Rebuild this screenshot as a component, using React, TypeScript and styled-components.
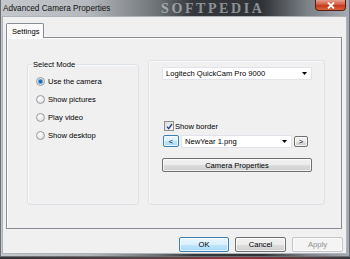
import React from "react";
import styled, { createGlobalStyle } from "styled-components";

const Global = createGlobalStyle`
  html, body { margin: 0; padding: 0; }
  body { background: #2b2b2b; font-family: "Liberation Sans", Arial, sans-serif; }
`;

const Screen = styled.div`
  width: 350px;
  height: 259px;
  overflow: hidden;
  background: linear-gradient(90deg, #3a3434 0%, #5a4444 40%, #8a3838 70%, #3a3a3a 100%);
`;

const Frame = styled.div`
  height: 257px;
  display: flex;
  flex-direction: column;
  background: linear-gradient(90deg, #c4c7cb 0%, #b5b9be 25%, #6d7277 45%, #34383c 55%, #2f3337 75%, #7d8288 88%, #a6abb1 100%);
  box-sizing: border-box;
  border-left: 1px solid #6b7076;
  border-right: 1px solid #6b7076;
  border-bottom: 1px solid #6b7076;
`;

const TitleBar = styled.div`
  height: 16px;
  display: flex;
  align-items: flex-start;
  overflow: hidden;
`;

const Title = styled.div`
  font-size: 8.2px;
  color: #111;
  padding: 4px 0 0 2px;
  white-space: nowrap;
  width: 158px;
`;

const Watermark = styled.div`
  font-family: "Liberation Serif", "Times New Roman", serif;
  font-weight: bold;
  font-size: 14px;
  line-height: 15px;
  letter-spacing: 2.6px;
  color: rgba(235, 238, 242, 0.5);
  margin-top: 1px;
  white-space: nowrap;
`;

const CloseButton = styled.div`
  margin-left: auto;
  margin-right: 3px;
  width: 31px;
  height: 11px;
  box-sizing: border-box;
  border: 1px solid #5a1d14;
  border-top: none;
  border-radius: 0 0 4px 4px;
  background: linear-gradient(180deg, #e6a08e 0%, #d5593f 45%, #c43b1d 55%, #d8643c 100%);
  display: flex;
  align-items: center;
  justify-content: center;
`;

const Client = styled.div`
  flex: 1;
  margin: 0 2px 2px 1px;
  background: #f0f0f0;
  border: 1px solid #aeb3b8;
  box-sizing: border-box;
  padding: 6px 4px 0 3px;
  display: flex;
  flex-direction: column;
  font-size: 7.6px;
  color: #000;
`;

const TabStrip = styled.div`
  display: flex;
  height: 14px;
`;

const Tab = styled.div`
  width: 38px;
  box-sizing: border-box;
  border: 1px solid #898c95;
  border-bottom: none;
  border-radius: 2px 2px 0 0;
  background: #fbfbfb;
  box-shadow: inset 1px 1px 0 #ffffff;
  padding: 3px 0 0 5px;
  margin-bottom: -1px;
  position: relative;
  z-index: 1;
`;

const TabPanel = styled.div`
  height: 192px;
  box-sizing: border-box;
  border: 1px solid #898c95;
  background: #f0f0f0;
  box-shadow: inset 1px 1px 0 #ffffff;
  padding: 22px 16px 23px 20px;
  display: flex;
  gap: 9px;
`;

const Group = styled.fieldset<{ $w: number }>`
  width: ${(p) => p.$w}px;
  margin: 0;
  box-sizing: border-box;
  border: 1px solid #dde3e8;
  border-radius: 3px;
  padding: 0;
  display: flex;
  flex-direction: column;
  box-shadow: inset 1px 1px 0 #fafafa;
`;

const Legend = styled.legend`
  font-size: 7.6px;
  margin-left: 4px;
  padding: 0 1px;
  line-height: 9px;
`;

const RadioList = styled.div`
  display: flex;
  flex-direction: column;
  gap: 9px;
  padding: 8px 0 0 8px;
`;

const RadioRow = styled.label`
  display: flex;
  align-items: center;
  gap: 3px;
  height: 9px;
`;

const Radio = styled.span<{ $on?: boolean }>`
  width: 9px;
  height: 9px;
  box-sizing: border-box;
  border-radius: 50%;
  border: 1px solid #979da3;
  background: ${(p) =>
    p.$on
      ? "radial-gradient(circle, #1d5f9f 0, #2a77bd 1.6px, #8fc6ef 2.5px, #e9e9e9 3.1px, #f7f7f7 100%)"
      : "radial-gradient(circle at 40% 35%, #ffffff 0, #e6e6e6 60%, #d4d4d4 100%)"};
`;

const RightBody = styled.div`
  display: flex;
  flex-direction: column;
  padding: 6px 12px 0 13px;
`;

const Combo = styled.div<{ $w?: number }>`
  height: 13px;
  ${(p) => (p.$w ? `width: ${p.$w}px;` : "")}
  box-sizing: border-box;
  border: 1px solid #e2e3ea;
  background: #fff;
  display: flex;
  align-items: center;
  padding: 0 4px 0 3px;
  justify-content: space-between;
`;

const CheckRow = styled.label`
  display: flex;
  align-items: center;
  gap: 1px;
  margin-top: 41px;
  height: 10px;
  padding-left: 2px;
`;

const CheckBox = styled.span`
  width: 10px;
  height: 10px;
  box-sizing: border-box;
  border: 1px solid #8f8f8f;
  background: linear-gradient(135deg, #dcdcdc, #f8f8f8);
  display: flex;
  align-items: center;
  justify-content: center;
`;

const NavRow = styled.div`
  display: flex;
  align-items: center;
  gap: 2px;
  margin-top: 4px;
  height: 12px;
  padding-left: 1px;
`;

const Button = styled.div<{ $w: number; $h: number; $kind?: "blue" | "disabled" }>`
  width: ${(p) => p.$w}px;
  height: ${(p) => p.$h}px;
  box-sizing: border-box;
  border-radius: 2px;
  display: flex;
  align-items: center;
  justify-content: center;
  border: 1px solid
    ${(p) => (p.$kind === "blue" ? "#3c7fb1" : p.$kind === "disabled" ? "#c4c7ca" : "#707070")};
  background: ${(p) =>
    p.$kind === "blue"
      ? "linear-gradient(180deg, #eaf6fd 0%, #d9f0fc 50%, #bee6fd 51%, #a7d9f5 100%)"
      : p.$kind === "disabled"
      ? "#f4f4f4"
      : "linear-gradient(180deg, #f2f2f2 0%, #ebebeb 50%, #dddddd 51%, #cfcfcf 100%)"};
  box-shadow: inset 0 0 0 1px ${(p) => (p.$kind === "disabled" ? "#f9f9f9" : "rgba(255,255,255,0.7)")};
  color: ${(p) => (p.$kind === "disabled" ? "#8c8c8c" : "#000")};
  font-size: 7.6px;
`;

const CameraButton = styled(Button)`
  margin-top: 11px;
`;

const ButtonRow = styled.div`
  display: flex;
  justify-content: flex-end;
  gap: 6px;
  margin-top: 8px;
  margin-right: -1px;
`;

const Arrow = () => (
  <svg width="5" height="3" viewBox="0 0 5 3">
    <path d="M0 0h5L2.5 3z" fill="#000" />
  </svg>
);

const modes = ["Use the camera", "Show pictures", "Play video", "Show desktop"];

export default function App() {
  return (
    <Screen>
      <Global />
      <Frame>
        <TitleBar>
          <Title>Advanced Camera Properties</Title>
          <Watermark>SOFTPEDIA</Watermark>
          <CloseButton>
            <svg width="8" height="7" viewBox="0 0 8 7">
              <path d="M1 0.5L7 6.5M7 0.5L1 6.5" stroke="#fff" strokeWidth="1.8" />
            </svg>
          </CloseButton>
        </TitleBar>
        <Client>
          <TabStrip>
            <Tab>Settings</Tab>
          </TabStrip>
          <TabPanel>
            <Group $w={114}>
              <Legend>Select Mode</Legend>
              <RadioList>
                {modes.map((m, i) => (
                  <RadioRow key={m}>
                    <Radio $on={i === 0} />
                    {m}
                  </RadioRow>
                ))}
              </RadioList>
            </Group>
            <Group $w={176}>
              <RightBody>
                <Combo>
                  <span>Logitech QuickCam Pro 9000</span>
                  <Arrow />
                </Combo>
                <CheckRow>
                  <CheckBox>
                    <svg width="7" height="7" viewBox="0 0 7 7">
                      <path d="M1 3.6L2.7 5.6L6 1" stroke="#2b3f8f" strokeWidth="1.3" fill="none" />
                    </svg>
                  </CheckBox>
                  Show border
                </CheckRow>
                <NavRow>
                  <Button $w={16} $h={12} $kind="blue">&lt;</Button>
                  <Combo $w={111}>
                    <span>NewYear 1.png</span>
                    <Arrow />
                  </Combo>
                  <Button $w={14} $h={11}>&gt;</Button>
                </NavRow>
                <CameraButton $w={150} $h={14}>Camera Properties</CameraButton>
              </RightBody>
            </Group>
          </TabPanel>
          <ButtonRow>
            <Button $w={50} $h={15} $kind="blue">OK</Button>
            <Button $w={51} $h={15}>Cancel</Button>
            <Button $w={51} $h={15} $kind="disabled">Apply</Button>
          </ButtonRow>
        </Client>
      </Frame>
    </Screen>
  );
}
